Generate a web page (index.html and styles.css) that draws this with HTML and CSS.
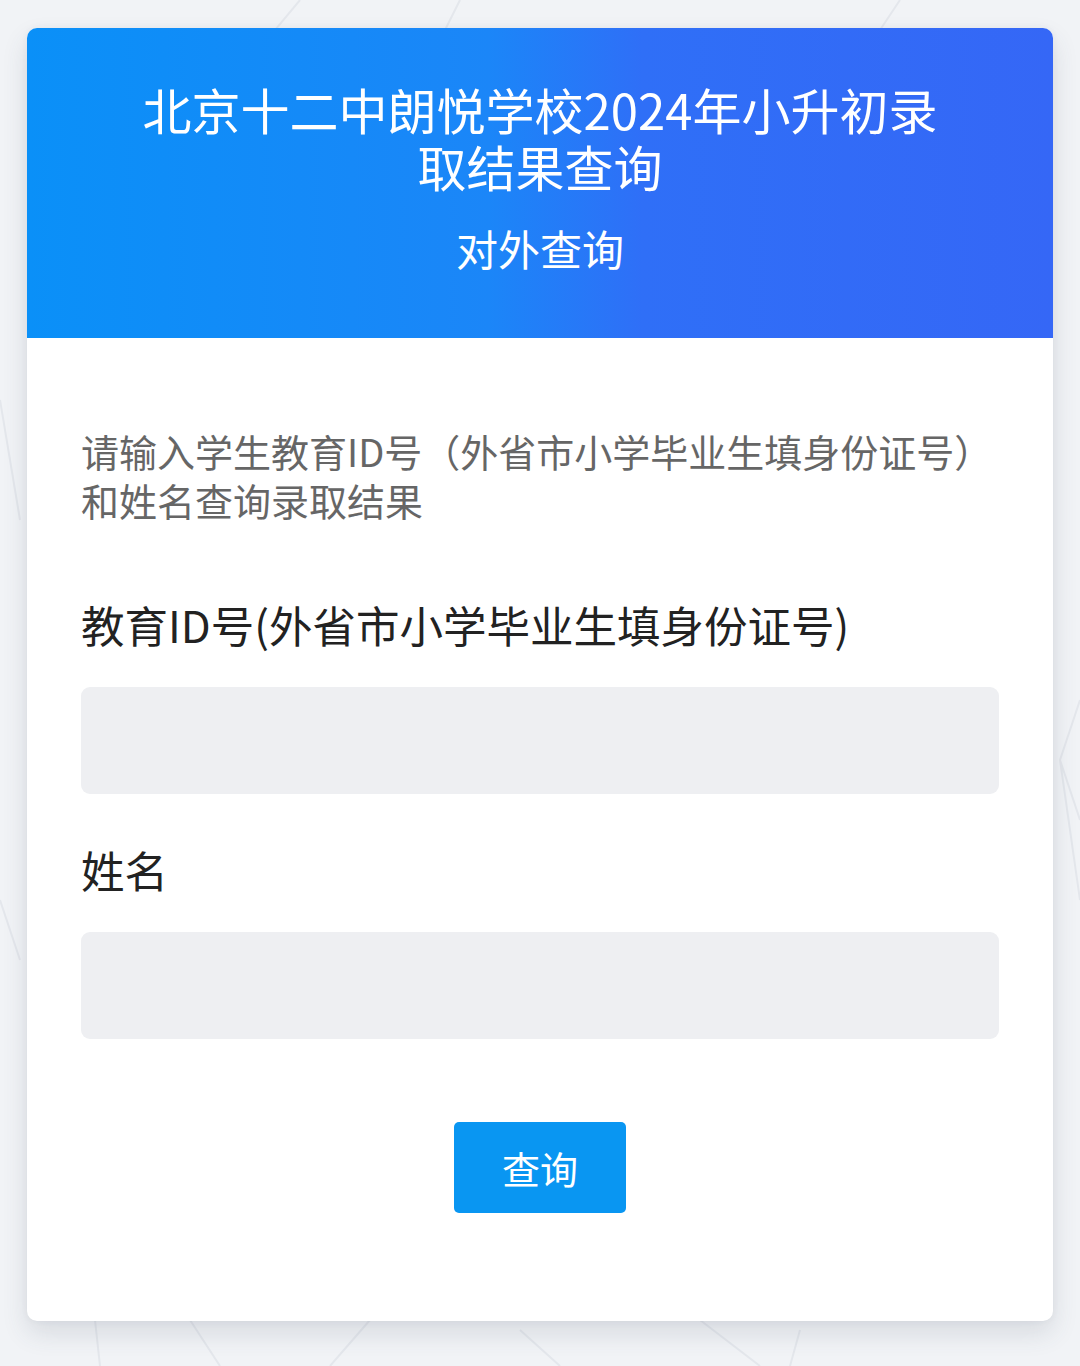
FILE: index.html
```html
<!DOCTYPE html>
<html lang="zh-CN">
<head>
<meta charset="utf-8">
<title>北京十二中朗悦学校2024年小升初录取结果查询</title>
<link rel="stylesheet" href="styles.css">
</head>
<body>
<main class="page">
  <section class="card">
    <header class="card-head">
      <h1 class="title">北京十二中朗悦学校2024年小升初录取结果查询</h1>
      <p class="subtitle">对外查询</p>
    </header>
    <form class="card-body" onsubmit="return false">
      <p class="hint">请输入学生教育ID号（外省市小学毕业生填身份证号）和姓名查询录取结果</p>
      <div class="field field-first">
        <label class="label" for="eid">教育ID号(外省市小学毕业生填身份证号)</label>
        <input class="input" id="eid" type="text">
      </div>
      <div class="field">
        <label class="label" for="name">姓名</label>
        <input class="input" id="name" type="text">
      </div>
      <div class="actions">
        <button class="btn" type="submit">查询</button>
      </div>
    </form>
  </section>
</main>
</body>
</html>
```

FILE: styles.css
```css
* { box-sizing: border-box; }
html, body { margin: 0; padding: 0; }
body {
  background-color: #f1f3f6;
  background-image: url("data:image/svg+xml,%3Csvg xmlns='http://www.w3.org/2000/svg' width='1080' height='1366'%3E%3Cg stroke='%23e4e7ec' stroke-width='2' fill='none'%3E%3Cpath d='M300 0 L250 60 M460 0 L440 40 M900 0 L880 30 M1080 700 L1060 760 L1080 820 M1060 760 L1080 900 M0 400 L20 520 M0 900 L20 960 M100 1366 L95 1320 M190 1320 L220 1366 M370 1320 L330 1366 M520 1330 L560 1366 M700 1320 L760 1366 M790 1366 L800 1330'/%3E%3C/g%3E%3C/svg%3E");
  background-repeat: no-repeat;
  font-family: "Noto Sans CJK SC", "Noto Sans", sans-serif;
}
.page {
  padding: 28px 27px 46px;
}
.card {
  background: #ffffff;
  border-radius: 10px;
  box-shadow: 0 12px 26px rgba(60, 70, 90, 0.14), 0 0 6px rgba(60, 70, 90, 0.06);
  overflow: hidden;
}
.card-head {
  background: linear-gradient(90deg, #0a90f8 0%, #1b86f8 45%, #2f6ff7 60%, #3567f6 100%);
  color: #ffffff;
  text-align: center;
  padding: 52px 100px 0;
  height: 310px;
}
.title {
  margin: 0;
  font-size: 49px;
  font-weight: 400;
  line-height: 57px;
}
.subtitle {
  margin: 28px 0 0;
  font-size: 42px;
  font-weight: 400;
  line-height: 52px;
}
.card-body {
  padding: 88px 54px 108px;
  margin: 0;
}
.hint {
  margin: 0;
  color: #666666;
  font-size: 38px;
  line-height: 49px;
}
.field { margin-top: 46px; }
.field-first { margin-top: 71px; }
.label {
  display: block;
  color: #222222;
  font-size: 43.5px;
  line-height: 60px;
}
.input {
  display: block;
  width: 100%;
  height: 107px;
  margin-top: 32px;
  border: 0;
  border-radius: 9px;
  background: #eeeff2;
  font: inherit;
  outline: none;
}
.actions {
  display: flex;
  justify-content: center;
  margin-top: 83px;
}
.btn {
  width: 172px;
  height: 91px;
  border: 0;
  border-radius: 5px;
  background: #0996f2;
  color: #ffffff;
  font-family: "Noto Sans CJK SC", sans-serif;
  font-size: 38px;
  cursor: pointer;
}
```
